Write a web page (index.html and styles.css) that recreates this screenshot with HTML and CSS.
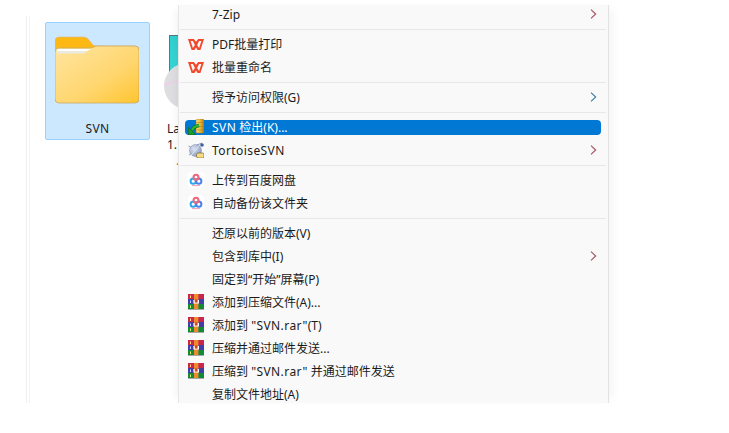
FILE: index.html
```html
<!DOCTYPE html>
<html lang="zh-CN">
<head>
<meta charset="utf-8">
<title>SVN</title>
<link rel="stylesheet" href="styles.css">
</head>
<body>
<svg class="defs" width="0" height="0" aria-hidden="true">
  <defs>
    <linearGradient id="folderFront" x1="0" y1="0" x2="1" y2="1">
      <stop offset="0" stop-color="#ffe5a0"/>
      <stop offset="0.6" stop-color="#ffd66e"/>
      <stop offset="1" stop-color="#ffc52f"/>
    </linearGradient>
    <linearGradient id="coin" x1="0" y1="0" x2="1" y2="0">
      <stop offset="0" stop-color="#f8e488"/>
      <stop offset="0.5" stop-color="#eebb3a"/>
      <stop offset="1" stop-color="#b67c14"/>
    </linearGradient>
    <radialGradient id="ball" cx="0.35" cy="0.35" r="0.8">
      <stop offset="0" stop-color="#d9e1f2"/>
      <stop offset="1" stop-color="#8494bd"/>
    </radialGradient>
    <symbol id="wps" viewBox="0 0 16 11">
      <path d="M0 0 H5.8 L8 2.8 L10.2 0 H16 L12.4 11 H9.6 L8 8.4 L6.4 11 H3.6 Z M2.6 1.9 L4.9 9 L6.9 5.9 L4.9 1.9 Z M13.4 1.9 H11.1 L9.1 5.9 L11.1 9 Z" fill="#f2482c" fill-rule="evenodd"/>
    </symbol>
    <symbol id="rar" viewBox="0 0 16 16">
      <rect x="0" y="0" width="16" height="5" fill="#c9264f"/>
      <rect x="0" y="5" width="16" height="5" fill="#3f3fa6"/>
      <rect x="0" y="10" width="16" height="5" fill="#128a3c"/>
      <rect x="0" y="15" width="16" height="1" fill="#a8a8a8"/>
      <rect x="6" y="0" width="4.4" height="15" fill="#ee8a2c"/>
      <rect x="2" y="1.5" width="1" height="2.5" fill="#ffe27a"/>
      <rect x="2" y="6.5" width="1" height="2.5" fill="#c9d4ff"/>
      <rect x="2" y="11.5" width="1" height="2.5" fill="#e8ef6a"/>
      <path d="M5.4 9.6 V6 H6.6 V8.4 H9.8 V6 H11 V9.6 Z" fill="#fff"/>
      <rect x="7.2" y="5.4" width="2" height="3" fill="#c4452a"/>
    </symbol>
    <symbol id="baidu" viewBox="0 0 16 16">
      <rect x="0" y="0" width="16" height="16" rx="4" fill="#ffffff"/>
      <circle cx="5.2" cy="9.2" r="2.6" fill="none" stroke="#2fa8e8" stroke-width="2"/>
      <circle cx="10.8" cy="9.2" r="2.6" fill="none" stroke="#4a82ee" stroke-width="2"/>
      <circle cx="8" cy="5.2" r="2.5" fill="none" stroke="#f0677a" stroke-width="2"/>
      <path d="M4 13.6 H12" stroke="#f2a0b0" stroke-width="1"/>
    </symbol>
    <symbol id="chev" viewBox="0 0 7 10">
      <path d="M1 0.6 L5.7 5 L1 9.4" fill="none" stroke="#a2505f" stroke-width="1.1"/>
    </symbol>
    <symbol id="chev-blue" viewBox="0 0 7 10">
      <path d="M1 0.6 L5.7 5 L1 9.4" fill="none" stroke="#3a7ca6" stroke-width="1.1"/>
    </symbol>
  </defs>
</svg>

<main class="explorer">
  <div class="tile tile-selected">
    <svg class="folder" viewBox="0 0 84 68" width="84" height="68" aria-hidden="true">
      <path d="M0 5 Q0 1 4 1 H28 Q32 1 34 4 L38 9 Q40 10 44 10 H80 Q84 10 84 14 V30 H0 Z" fill="#fdb813" stroke="#d7b98b" stroke-width="0.6"/>
      <path d="M4 12 H34 Q38 12 41 10 H80 Q84 10 84 14 V63 Q84 67 80 67 H4 Q0 67 0 63 V16 Q0 12 4 12 Z" fill="url(#folderFront)" stroke="#c9a865" stroke-width="0.8"/>
      <path d="M2 13 H36 L32 15 H2 Z" fill="#ffffff"/>
      <path d="M2 15 H32 L29 17.5 H2 Z" fill="#ece9e0"/>
    </svg>
    <span class="tile-name">SVN</span>
  </div>
  <div class="tile tile-other">
    <div class="disc-art">
      <div class="sleeve"></div>
      <div class="disc"></div>
    </div>
    <span class="tile-text">La</span>
    <span class="tile-text">1.</span>
    <span class="tile-mark">.</span>
  </div>
</main>

<nav class="menu">
  <ul class="menu-list">
    <li class="row"><span class="ico"></span><span class="lbl">7-Zip</span><svg class="arrow"><use href="#chev"/></svg></li>
    <li class="sep"></li>
    <li class="row"><span class="ico"><svg class="i-wps"><use href="#wps"/></svg></span><span class="lbl">PDF批量打印</span></li>
    <li class="row"><span class="ico"><svg class="i-wps"><use href="#wps"/></svg></span><span class="lbl">批量重命名</span></li>
    <li class="sep"></li>
    <li class="row"><span class="ico"></span><span class="lbl">授予访问权限(G)</span><svg class="arrow"><use href="#chev-blue"/></svg></li>
    <li class="sep"></li>
    <li class="row row-active">
      <span class="hl"></span>
      <span class="ico">
        <svg class="i-svn" viewBox="0 0 16 16">
          <rect x="8" y="0" width="8" height="14" rx="1.5" fill="url(#coin)" stroke="#a87618" stroke-width="0.5"/>
          <path d="M8 3.5 H16 M8 7.5 H16 M8 11 H16" stroke="#a87618" stroke-width="0.5"/>
          <path d="M4.2 11.5 Q4.8 7.6 11 6.4" fill="none" stroke="#0c6a14" stroke-width="3.6"/>
          <path d="M0.4 8.4 V15.8 H7.8 Z" fill="#1f9a26" stroke="#0c6a14" stroke-width="0.7"/>
          <path d="M4.2 11.5 Q4.8 7.6 11 6.4" fill="none" stroke="#2fb632" stroke-width="2.4"/>
        </svg>
      </span>
      <span class="lbl"><span class="wide">SVN</span> 检出(K)...</span>
    </li>
    <li class="row">
      <span class="ico">
        <svg class="i-svn" viewBox="0 0 16 16">
          <path d="M0.5 4 L4 6 M1 13 L4 11 M9 3 L14 1" stroke="#8e9bb8" stroke-width="1"/>
          <circle cx="7.5" cy="8.5" r="6" fill="url(#ball)" stroke="#7c88a8" stroke-width="0.5"/>
          <circle cx="14" cy="3" r="1.8" fill="#3f5f9f"/>
          <path d="M2.5 14 L11 4" stroke="#eef1f8" stroke-width="0.8"/>
          <rect x="8.5" y="11" width="7.5" height="5" rx="1.6" fill="#f6dd83" stroke="#6f6330" stroke-width="0.7"/>
        </svg>
      </span>
      <span class="lbl"><span class="wide">TortoiseSVN</span></span>
      <svg class="arrow"><use href="#chev"/></svg>
    </li>
    <li class="sep"></li>
    <li class="row"><span class="ico"><svg class="i-baidu"><use href="#baidu"/></svg></span><span class="lbl">上传到百度网盘</span></li>
    <li class="row"><span class="ico"><svg class="i-baidu"><use href="#baidu"/></svg></span><span class="lbl">自动备份该文件夹</span></li>
    <li class="sep"></li>
    <li class="row"><span class="ico"></span><span class="lbl">还原以前的版本(V)</span></li>
    <li class="row"><span class="ico"></span><span class="lbl">包含到库中(I)</span><svg class="arrow"><use href="#chev"/></svg></li>
    <li class="row"><span class="ico"></span><span class="lbl">固定到“开始”屏幕(P)</span></li>
    <li class="row"><span class="ico"><svg class="i-rar"><use href="#rar"/></svg></span><span class="lbl">添加到压缩文件(A)...</span></li>
    <li class="row"><span class="ico"><svg class="i-rar"><use href="#rar"/></svg></span><span class="lbl">添加到 <span class="wide">"SVN.rar"</span>(T)</span></li>
    <li class="row"><span class="ico"><svg class="i-rar"><use href="#rar"/></svg></span><span class="lbl">压缩并通过邮件发送...</span></li>
    <li class="row"><span class="ico"><svg class="i-rar"><use href="#rar"/></svg></span><span class="lbl">压缩到 <span class="wide">"SVN.rar"</span> 并通过邮件发送</span></li>
    <li class="row"><span class="ico"></span><span class="lbl">复制文件地址(A)</span></li>
  </ul>
</nav>
</body>
</html>
```

FILE: styles.css
```css
html, body {
  margin: 0;
  padding: 0;
  width: 729px;
  height: 433px;
  overflow: hidden;
  background: #fff;
  font-family: "Noto Sans", "Noto Sans CJK SC", sans-serif;
  color: #1b1b1b;
}

.defs { position: absolute; }

.explorer {
  margin: 16px 0 0 26px;
  height: 387px;
  width: 200px;
  box-sizing: border-box;
  border-left: 1px solid #efefef;
  box-shadow: inset 2px 0 0 #fff, inset 3px 0 0 #f3f3f3;
  display: flex;
  align-items: flex-start;
  padding: 6px 0 0 18px;
  gap: 14px;
}

.tile {
  box-sizing: border-box;
  display: flex;
  flex-direction: column;
}

.tile-selected {
  flex: none;
  width: 105px;
  height: 118px;
  background: #cce8ff;
  border: 1px solid #99d1ff;
  border-radius: 2px;
  align-items: center;
  padding: 13px 2px 0 0;
}

.folder { display: block; }

.tile-name {
  margin: 16px 0 0 2px;
  font-size: 12px;
  line-height: 18px;
  letter-spacing: 0.3px;
}

.tile-other {
  flex: none;
  width: 40px;
  padding-top: 13px;
  font-size: 12px;
  line-height: 16px;
}

.disc-art {
  position: relative;
  height: 86px;
}

.sleeve {
  position: absolute;
  left: 5px;
  top: 0;
  width: 30px;
  height: 60px;
  background: linear-gradient(180deg, #2fd0d0, #3fd8d6);
  border: 1px solid #5c7480;
}

.disc {
  position: absolute;
  left: 0;
  top: 28px;
  width: 46px;
  height: 46px;
  border-radius: 50%;
  background:
    linear-gradient(160deg, transparent 34%, #ecd0ea 34%, #ecd0ea 37%, transparent 37%),
    #dedee0;
}

.tile-text { display: block; margin-left: 3px; height: 16px; }
.tile-mark { display: block; margin: 3px 0 0 12px; color: #e06a10; line-height: 10px; height: 10px; }

.menu {
  position: absolute;
  left: 178px;
  top: 5px;
  width: 431px;
  height: 398px;
  box-sizing: border-box;
  background: #f9f9f9;
  border-left: 1px solid #e6e6e6;
  border-right: 1px solid #e2e2e2;
  box-shadow: -6px 0 8px -4px rgba(0,0,0,.05), 8px 0 9px -4px rgba(0,0,0,.045);
  overflow: hidden;
}

.menu-list {
  list-style: none;
  margin: -2.5px 0 0;
  padding: 0;
}

.row {
  position: relative;
  display: flex;
  align-items: center;
  height: 23px;
  font-size: 12px;
  line-height: 23px;
}

.ico {
  position: relative;
  flex: none;
  box-sizing: border-box;
  width: 33px;
  height: 16px;
  padding-left: 9px;
  display: flex;
  align-items: center;
}

.ico svg { display: block; }
.i-wps { width: 16px; height: 11px; }
.i-svn { width: 16px; height: 16px; }
.i-baidu { width: 16px; height: 16px; }
.i-rar { width: 16px; height: 16px; }

.lbl { position: relative; flex: 1; white-space: nowrap; }
.wide { letter-spacing: 0.42px; }

.arrow {
  position: relative;
  flex: none;
  width: 7px;
  height: 10px;
  margin-right: 11px;
}

.sep {
  height: 1px;
  margin: 3px 2px 3px 1px;
  background: #e7e7e7;
}

.row-active { color: #fff; }

.hl {
  position: absolute;
  left: 6px;
  right: 7px;
  top: 4px;
  bottom: 4px;
  background: #0078d4;
  border-radius: 4px;
}
```
